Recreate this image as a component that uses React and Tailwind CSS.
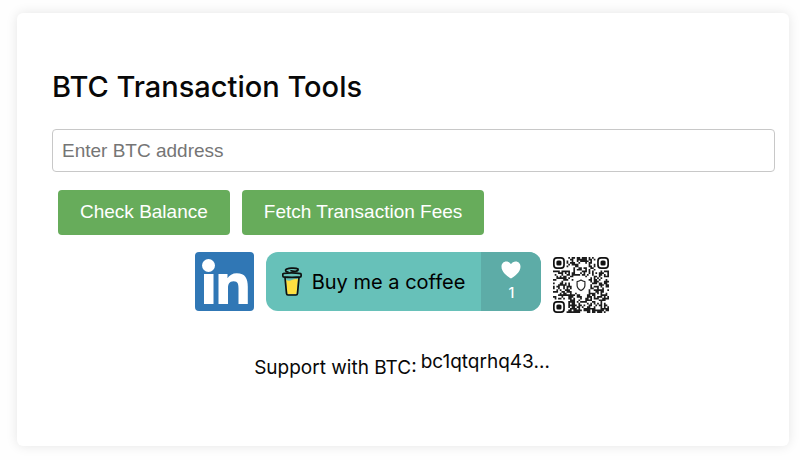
import React from "react";

const QR_SIZE = 33;
const FINDERS = [
  [0, 0],
  [26, 0],
  [0, 26],
];

// Dark modules outside of the finder squares and the centre logo
function qrModules() {
  const modules = [];
  let seed = 4371;
  for (let y = 0; y < QR_SIZE; y++) {
    for (let x = 0; x < QR_SIZE; x++) {
      seed = (seed * 16807) % 2147483647;
      const inFinder =
        (x < 8 && y < 8) || (x > 24 && y < 8) || (x < 8 && y > 24);
      const inLogo = Math.hypot(x - 16, y - 16) < 5.8;
      if (!inFinder && !inLogo && seed % 100 < 53) {
        modules.push(`M${x} ${y}h1v1h-1z`);
      }
    }
  }
  return modules.join("");
}

function QrCode() {
  return (
    <svg
      viewBox="0 0 33 33"
      className="h-14 w-14"
      role="img"
      aria-label="BTC address QR code"
    >
      <path d={qrModules()} fill="#1c1c1c" />
      {FINDERS.map(([x, y]) => (
        <g key={`${x}-${y}`}>
          <rect
            x={x + 0.5}
            y={y + 0.5}
            width="6"
            height="6"
            rx="1.8"
            fill="none"
            stroke="#111"
          />
          <rect x={x + 2} y={y + 2} width="3" height="3" rx="0.9" fill="#111" />
        </g>
      ))}
      <path
        d="M16.500 13.600c.8.6 1.400.8 2.300.9v2.300c0 1.500-.8 2.200-2.300 3-1.500-.8-2.300-1.500-2.300-3v-2.300c.9-.1 1.500-.3 2.300-.9z"
        fill="#fff"
        stroke="#222"
        strokeWidth="0.7"
        strokeLinejoin="round"
      />
    </svg>
  );
}

function LinkedInLogo() {
  return (
    <svg viewBox="0 0 59 59" className="h-[59px] w-[59px]" aria-hidden="true">
      <rect width="59" height="59" rx="4" fill="#3077b5" />
      <circle cx="13.5" cy="13.5" r="6.5" fill="#fff" />
      <path
        d="M9 22h9.500v30H9zM23.500 22h9v4.200c1.700-3 5-5 9.300-5 8.500 0 11 5.300 11 13.500V52h-9.300V36.500c0-4-.5-7.200-4.900-7.200s-5.600 3.200-5.600 7V52h-9.500z"
        fill="#fff"
      />
    </svg>
  );
}

function CoffeeCup() {
  return (
    <svg viewBox="0 0 20 29" className="h-[29px] w-5" aria-hidden="true">
      <path d="M4 13q3 1.500 6 0t6-.8L14.500 27l-9 .3z" fill="#ffdf40" />
      <g
        fill="none"
        stroke="#0d1110"
        strokeWidth="1.700"
        strokeLinecap="round"
        strokeLinejoin="round"
      >
        <path d="M3 10.500 4.500 26.500q.1 1.500 1.500 1.500h8q1.400 0 1.500-1.500l1.500-16" />
        <path d="M1.200 6.500q8.800-1.500 17.600.2.700 1.500 0 3.100-8.800 1-17.600 0-.9-1.700 0-3.300z" />
        <path d="M6 5Q3.300 4.700 3.600 3q1-1.400 5.700-1.800 5-.3 6.700.8.600 1.700-2 2.200-2.500.3-5-.4" />
      </g>
    </svg>
  );
}

function Heart() {
  return (
    <svg viewBox="0 0 20 18" className="h-[18px] w-5" aria-hidden="true">
      <path
        d="M10 17.500C7 15.400.5 11.500.5 5.700.5 2.700 2.500.5 5.300.5c2 0 3.600 1 4.700 2.800C11.100 1.500 12.700.5 14.700.5c2.800 0 4.800 2.200 4.800 5.200 0 5.800-6.500 9.700-9.500 11.800z"
        fill="#fff"
      />
    </svg>
  );
}

function ToolButton({ children }) {
  return (
    <button
      type="button"
      className="h-[45px] rounded bg-[#67ac5b] px-[22px] font-['Liberation_Sans',sans-serif] text-[19px] text-white"
    >
      {children}
    </button>
  );
}

export default function App() {
  return (
    <div className="bg-[#fefefe] pt-[13px] pr-[11px] pb-[14px] pl-[17px] font-['Inter',sans-serif] text-[#080808]">
      <main className="rounded-md bg-white pt-14 pr-[37px] pb-[66px] pl-[35px] shadow-[0_0_12px_rgba(0,0,0,0.1)]">
        <h1 className="text-[29px] leading-9 font-medium">
          BTC Transaction Tools
        </h1>

        <div className="mt-6 -mr-[23px] flex">
          <input
            type="text"
            aria-label="BTC address"
            placeholder="Enter BTC address"
            className="h-[43px] w-full rounded border border-[#c8c8c8] px-[9px] font-['Liberation_Sans',sans-serif] text-[19px] placeholder:text-[#757575]"
          />
        </div>

        <div className="mt-[18px] flex gap-3 px-1.5">
          <ToolButton>Check Balance</ToolButton>
          <ToolButton>Fetch Transaction Fees</ToolButton>
        </div>

        {/* Social and donation links */}
        <div className="mt-[17px] flex items-start justify-center gap-3">
          <a href="#linkedin" aria-label="LinkedIn">
            <LinkedInLogo />
          </a>
          <a
            href="#coffee"
            className="flex h-[59px] overflow-hidden rounded-xl bg-[#67c1b9]"
          >
            <span className="flex items-center gap-2.5 px-4 text-[20px] text-black">
              <CoffeeCup />
              Buy me a coffee
            </span>
            <span className="flex w-[60px] flex-col items-center gap-1 bg-[#5daca7] pt-[9px] text-[14px] leading-5 font-medium text-white">
              <Heart />1
            </span>
          </a>
          <div className="pt-[5px]">
            <QrCode />
          </div>
        </div>

        <div className="mt-[37px] flex items-start justify-center gap-1 text-[19px] leading-6">
          <p className="pt-1.5">Support with BTC:</p>
          <p>bc1qtqrhq43…</p>
        </div>
      </main>
    </div>
  );
}
